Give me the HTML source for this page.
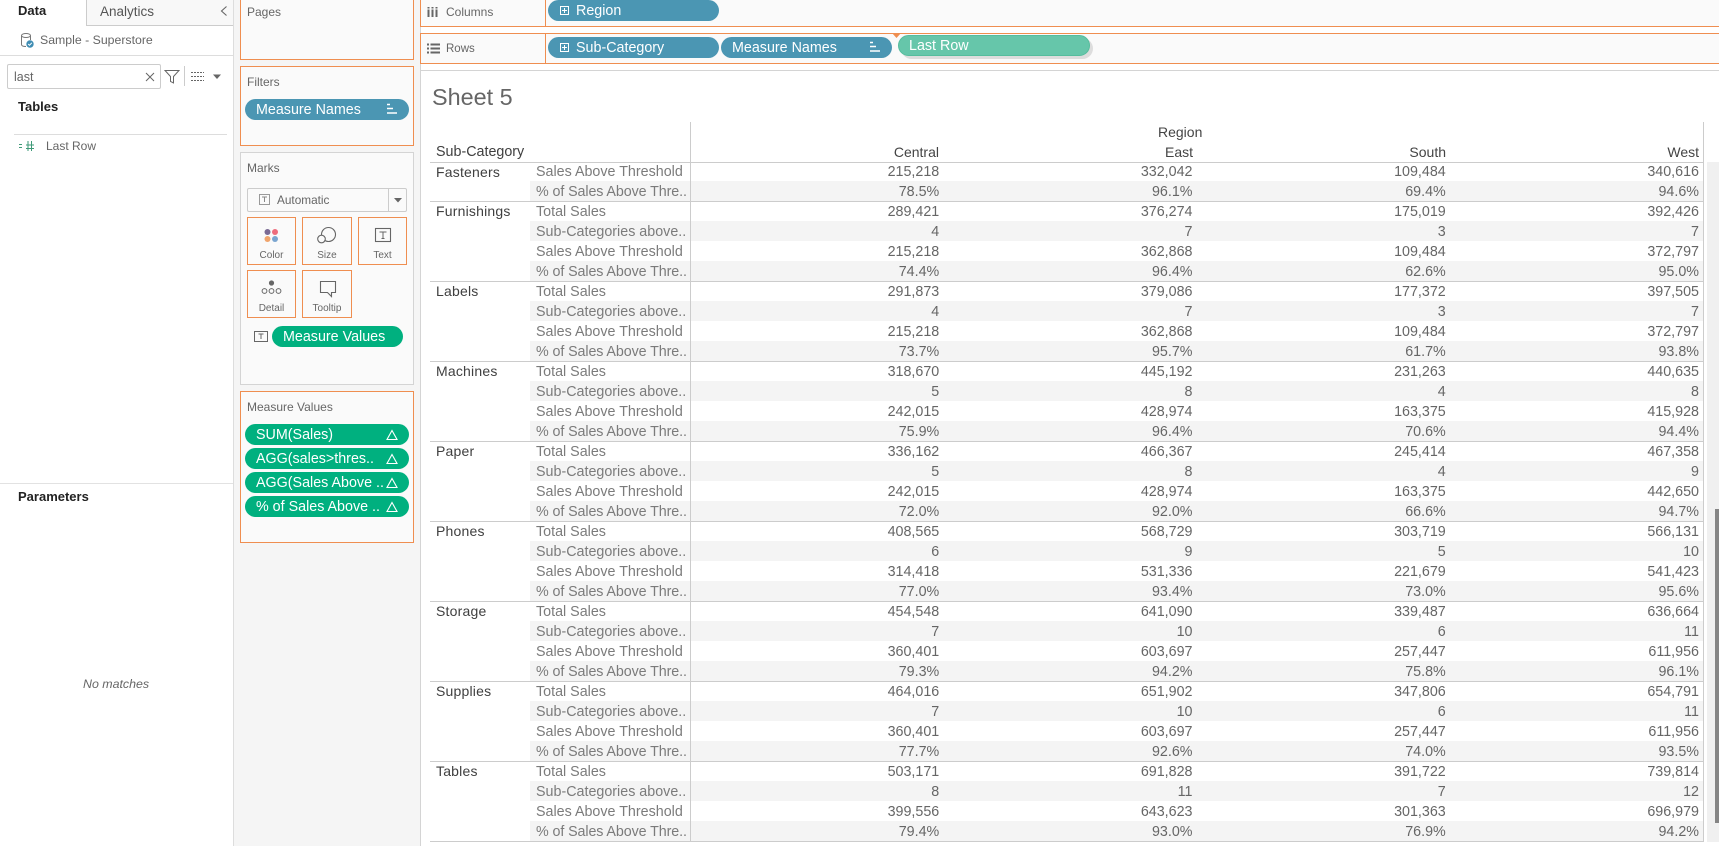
<!DOCTYPE html>
<html><head><meta charset="utf-8"><title>Sheet 5</title>
<style>
*{box-sizing:border-box}
html,body{margin:0;padding:0}
body{width:1719px;height:846px;overflow:hidden;background:#fff;font-family:"Liberation Sans",sans-serif;position:relative;color:#666}
.x{position:absolute}
.t{position:absolute;white-space:nowrap;line-height:16px}
.box{position:absolute;background:#fafafa;border:1px solid #ef8e50}
.pill{position:absolute;height:21px;border-radius:11px;color:#fff;font-size:14.3px;line-height:23px;white-space:nowrap;padding-left:11px}
.bl{background:#4b96b3}.gr{background:#00b07f}
.pill .d{position:absolute;right:11px;top:4px}
.btn{position:absolute;width:49px;height:48px;border:1px solid #ef8e50;background:#fafafa;font-size:10px;line-height:14px;text-align:center;color:#666}
.btn span{position:absolute;left:0;right:0;top:31px}
.btn svg{position:absolute;left:12px;top:6px}
#tb{position:absolute;left:430px;top:161px;width:1273px;font-size:14.3px;color:#666}
.g{position:relative}
.g::before{content:"";position:absolute;left:0;right:0;top:0;height:1px;background:#ccc;z-index:2}
.g.f::before{top:1px}
.r{display:flex;height:20px;line-height:20px;white-space:nowrap}
.r b{display:block;font-weight:400;width:100px;padding-left:6px;color:#3f3f3f;font-size:14px;letter-spacing:.2px}
.r i{display:block;font-style:normal;width:160px;padding:1px 0 0 6px;color:#7b7b7b}
.r:last-child i{letter-spacing:-.1px}
.r u{display:block;text-decoration:none;width:253.25px;text-align:right;padding:1px 4px 0 0}
.r:nth-child(even) i,.r:nth-child(even) u{background:#f4f4f4}
</style></head><body>

<!-- Left data pane -->
<div class="x" style="left:233px;top:0;width:187px;height:846px;background:#f5f5f5"></div>
<div class="x" style="left:233px;top:0;width:1px;height:846px;background:#ddd"></div>
<div class="x" style="left:86px;top:0;width:147px;height:26px;background:#f8f8f8;border-left:1px solid #ccc;border-bottom:1px solid #ccc"></div>
<div class="t" style="left:18px;top:3px;font-size:13px;font-weight:700;color:#222">Data</div>
<div class="t" style="left:100px;top:4px;font-size:13.5px;color:#555">Analytics</div>
<svg class="x" style="left:219px;top:5px" width="10" height="12"><path d="M7.5 1.5 L2.5 6 L7.5 10.5" fill="none" stroke="#666" stroke-width="1.1"/></svg>
<svg class="x" style="left:19px;top:32px" width="17" height="17"><ellipse cx="7" cy="3.5" rx="4.5" stroke="#777" fill="none" ry="2"/><path d="M2.5 3.5V12.5Q2.5 14.5 7 14.5M11.500 3.500V8" fill="none" stroke="#777"/><circle cx="11" cy="12" r="3.700" fill="#3f8db3"/><path d="M9.200 12l1.300 1.300 2.300-2.500" stroke="#fff" fill="none"/></svg>
<div class="t" style="left:40px;top:32px;font-size:12.3px;color:#666">Sample - Superstore</div>
<div class="x" style="left:0;top:55px;width:233px;height:1px;background:#ddd"></div>
<div class="x" style="left:7px;top:64px;width:154px;height:25px;border:1px solid #ccc;border-radius:2px;background:#fff"></div>
<div class="t" style="left:14px;top:69px;font-size:12.5px;color:#666">last</div>
<svg class="x" style="left:145px;top:72px" width="10" height="10"><path d="M1 1L9 9M9 1L1 9" stroke="#666" stroke-width="1"/></svg>
<svg class="x" style="left:164px;top:69px" width="16" height="15"><path d="M1 1.500H15L9.500 7.500V14L6.500 12.500V7.500Z" fill="none" stroke="#666"/></svg>
<div class="x" style="left:184px;top:66px;width:1px;height:20px;background:#ccc"></div>
<svg class="x" style="left:191px;top:72px" width="13" height="9"><path d="M0 .5H13M0 4.500H13M0 8.500H13" stroke="#666" stroke-dasharray="2 1"/></svg>
<svg class="x" style="left:213px;top:74px" width="8" height="6"><path d="M0 .5H8L4 5Z" fill="#666"/></svg>
<div class="t" style="left:18px;top:99px;font-size:13px;font-weight:700;color:#222">Tables</div>
<div class="x" style="left:14px;top:134px;width:213px;height:1px;background:#ddd"></div>
<svg class="x" style="left:18px;top:140px" width="17" height="12"><path d="M1 4.500H4M1 7.500H4M8 5H16M8 8.500H16M10 1V11M13.500 1V11" stroke="#3f9a78" fill="none"/></svg>
<div class="t" style="left:46px;top:138px;font-size:12px;color:#666">Last Row</div>
<div class="x" style="left:0;top:483px;width:233px;height:1px;background:#e2e2e2"></div>
<div class="t" style="left:18px;top:489px;font-size:13px;font-weight:700;color:#222">Parameters</div>
<div class="t" style="left:83px;top:676px;font-size:12.4px;font-style:italic;color:#666">No matches</div>

<!-- Cards pane -->
<div class="box" style="left:240px;top:-2px;width:174px;height:62px"></div>
<div class="t" style="left:247px;top:4px;font-size:12px">Pages</div>
<div class="box" style="left:240px;top:66px;width:174px;height:80px"></div>
<div class="t" style="left:247px;top:74px;font-size:12px">Filters</div>
<div class="pill bl" style="left:245px;top:99px;width:164px">Measure Names<svg class="d" width="12" height="12"><path d="M1 1.500H4M1 5.500H7M1 10H11" stroke="#fff" stroke-width="1.500"/></svg></div>
<div class="x" style="left:240px;top:152px;width:174px;height:233px;background:#fafafa;border:1px solid #d4d4d4"></div>
<div class="t" style="left:247px;top:160px;font-size:12px">Marks</div>
<div class="x" style="left:247px;top:188px;width:160px;height:24px;background:#fafafa;border:1px solid #ccc;border-radius:2px"></div>
<div class="x" style="left:388px;top:189px;width:1px;height:22px;background:#ccc"></div>
<svg class="x" style="left:259px;top:194px" width="12" height="12"><rect x=".5" y=".5" width="10" height="10" fill="none" stroke="#999"/><path d="M3 3H8M5.500 3V8" stroke="#888"/></svg>
<div class="t" style="left:277px;top:192px;font-size:11.8px">Automatic</div>
<svg class="x" style="left:394px;top:198px" width="8" height="5"><path d="M0 0H8L4 4.500Z" fill="#666"/></svg>

<div class="btn" style="left:247px;top:217px"><svg width="25" height="22"><circle cx="11" cy="5" r="3" fill="#7a6a94" transform="translate(-3.500 3)"/><circle cx="15" cy="8" r="3" fill="#ee6c7c"/><circle cx="7.500" cy="15" r="3" fill="#f0a46c"/><circle cx="15" cy="15" r="3" fill="#7aa5d0"/></svg><span>Color</span></div>
<div class="btn" style="left:302px;top:217px;width:50px"><svg width="25" height="24"><circle cx="13.500" cy="10.500" r="7" fill="none" stroke="#666" stroke-width="1.100"/><circle cx="6.500" cy="15" r="3.800" fill="#fafafa" stroke="#666" stroke-width="1.100"/></svg><span>Size</span></div>
<div class="btn" style="left:358px;top:217px"><svg width="25" height="24"><rect x="4.500" y="4.500" width="15" height="13" fill="none" stroke="#666" stroke-width="1.100"/><path d="M8.500 8H15.500M12 8V14.500M10.500 14.500H13.500" stroke="#666"/></svg><span>Text</span></div>
<div class="btn" style="left:247px;top:270px"><svg width="25" height="22"><circle cx="11.500" cy="6" r="2.600" fill="#666"/><circle cx="4.500" cy="14" r="2.400" fill="none" stroke="#666"/><circle cx="11.500" cy="14" r="2.400" fill="none" stroke="#666"/><circle cx="18.500" cy="14" r="2.400" fill="none" stroke="#666"/></svg><span>Detail</span></div>
<div class="btn" style="left:302px;top:270px;width:50px"><svg width="25" height="24"><path d="M5.500 4.500H20.500V15.500H16.500V19.500L12.500 15.500H5.500Z" fill="none" stroke="#666" stroke-width="1.100"/></svg><span>Tooltip</span></div>

<svg class="x" style="left:254px;top:331px" width="15" height="12"><rect x=".5" y=".5" width="13" height="10" fill="none" stroke="#666"/><path d="M4.500 3H9.500M7 3V8" stroke="#666"/></svg>
<div class="pill gr" style="left:272px;top:326px;width:131px">Measure Values</div>

<div class="box" style="left:240px;top:391px;width:174px;height:152px"></div>
<div class="t" style="left:247px;top:399px;font-size:12px">Measure Values</div>
<div class="pill gr" style="left:245px;top:424px;width:164px">SUM(Sales)<svg class="d" width="12" height="12" style="top:5px"><path d="M6 1.500L11 10.500H1Z" fill="none" stroke="#fff" stroke-width="1.100"/></svg></div>
<div class="pill gr" style="left:245px;top:448px;width:164px">AGG(sales&gt;thres..<svg class="d" width="12" height="12" style="top:5px"><path d="M6 1.500L11 10.500H1Z" fill="none" stroke="#fff" stroke-width="1.100"/></svg></div>
<div class="pill gr" style="left:245px;top:472px;width:164px">AGG(Sales Above ..<svg class="d" width="12" height="12" style="top:5px"><path d="M6 1.500L11 10.500H1Z" fill="none" stroke="#fff" stroke-width="1.100"/></svg></div>
<div class="pill gr" style="left:245px;top:496px;width:164px">% of Sales Above ..<svg class="d" width="12" height="12" style="top:5px"><path d="M6 1.500L11 10.500H1Z" fill="none" stroke="#fff" stroke-width="1.100"/></svg></div>

<div class="x" style="left:420px;top:0;width:1px;height:846px;background:#d4d4d4"></div>

<!-- Shelves -->
<div class="box" style="left:420px;top:-2px;width:1302px;height:29px"></div>
<div class="x" style="left:545px;top:0;width:1px;height:26px;background:#ef8e50"></div>
<svg class="x" style="left:427px;top:6px" width="12" height="11"><path d="M1.500 3.500V11M5.500 3.500V11M9.500 3.500V11M1.500 1V2.500M5.500 1V2.500M9.500 1V2.500" stroke="#666" stroke-width="2"/></svg>
<div class="t" style="left:446px;top:4px;font-size:12px">Columns</div>
<div class="box" style="left:420px;top:33px;width:1302px;height:31px"></div>
<div class="x" style="left:545px;top:34px;width:1px;height:29px;background:#ef8e50"></div>
<svg class="x" style="left:427px;top:43px" width="13" height="11"><path d="M0 1.500H2M3.500 1.500H13M0 5.500H2M3.500 5.500H13M0 9.500H2M3.500 9.500H13" stroke="#666" stroke-width="2"/></svg>
<div class="t" style="left:446px;top:41px;font-size:11.5px">Rows</div>

<div class="pill bl" style="left:548px;top:0;width:171px;padding-left:28px">Region<svg class="x" style="left:12px;top:6px" width="9" height="9"><rect x=".5" y=".5" width="8" height="8" fill="none" stroke="#fff"/><path d="M2 4.500H7M4.500 2V7" stroke="#fff"/></svg></div>
<div class="pill bl" style="left:548px;top:37px;width:171px;padding-left:28px">Sub-Category<svg class="x" style="left:12px;top:6px" width="9" height="9"><rect x=".5" y=".5" width="8" height="8" fill="none" stroke="#fff"/><path d="M2 4.500H7M4.500 2V7" stroke="#fff"/></svg></div>
<div class="pill bl" style="left:721px;top:37px;width:171px">Measure Names<svg class="d" width="12" height="12"><path d="M1 1.500H4M1 5.500H7M1 10H11" stroke="#fff" stroke-width="1.500"/></svg></div>
<svg class="x" style="left:892px;top:33px" width="9" height="6"><path d="M0 0H9L4.500 5Z" fill="#ef8e50"/></svg>
<div class="pill" style="left:898px;top:35px;width:192px;background:#66c6aa;border:1px solid #55bd9d;box-shadow:3px 3px 0 #ddd;line-height:21px;padding-left:10px">Last Row</div>

<!-- View -->
<div class="x" style="left:421px;top:70px;width:1298px;height:1px;background:#d4d4d4"></div>
<div class="t" style="left:432px;top:83px;font-size:23.4px;line-height:28px;color:#666">Sheet 5</div>
<div class="t" style="left:1158px;top:124px;font-size:14px;color:#444">Region</div>
<div class="t" style="left:436px;top:144px;font-size:14.3px;color:#3f3f3f">Sub-Category</div>
<div class="t" style="right:780px;top:144px;font-size:14px;color:#444">Central</div>
<div class="t" style="right:526px;top:144px;font-size:14px;color:#444">East</div>
<div class="t" style="right:273px;top:144px;font-size:14px;color:#444">South</div>
<div class="t" style="right:20px;top:144px;font-size:14px;color:#444">West</div>

<div class="x" style="left:1707px;top:162px;width:12px;height:680px;background:#f0f0f0"></div>
<div class="x" style="left:1715px;top:509px;width:4px;height:314px;background:#858585"></div>

<div id="tb">
<div class="g f">
<div class="r"><b style="padding-top:1px">Fasteners</b><i>Sales Above Threshold</i><u>215,218</u><u>332,042</u><u>109,484</u><u>340,616</u></div>
<div class="r"><b></b><i>% of Sales Above Thre..</i><u>78.5%</u><u>96.1%</u><u>69.4%</u><u>94.6%</u></div>
</div>
<div class="g">
<div class="r"><b>Furnishings</b><i>Total Sales</i><u>289,421</u><u>376,274</u><u>175,019</u><u>392,426</u></div>
<div class="r"><b></b><i>Sub-Categories above..</i><u>4</u><u>7</u><u>3</u><u>7</u></div>
<div class="r"><b></b><i>Sales Above Threshold</i><u>215,218</u><u>362,868</u><u>109,484</u><u>372,797</u></div>
<div class="r"><b></b><i>% of Sales Above Thre..</i><u>74.4%</u><u>96.4%</u><u>62.6%</u><u>95.0%</u></div>
</div>
<div class="g">
<div class="r"><b>Labels</b><i>Total Sales</i><u>291,873</u><u>379,086</u><u>177,372</u><u>397,505</u></div>
<div class="r"><b></b><i>Sub-Categories above..</i><u>4</u><u>7</u><u>3</u><u>7</u></div>
<div class="r"><b></b><i>Sales Above Threshold</i><u>215,218</u><u>362,868</u><u>109,484</u><u>372,797</u></div>
<div class="r"><b></b><i>% of Sales Above Thre..</i><u>73.7%</u><u>95.7%</u><u>61.7%</u><u>93.8%</u></div>
</div>
<div class="g">
<div class="r"><b>Machines</b><i>Total Sales</i><u>318,670</u><u>445,192</u><u>231,263</u><u>440,635</u></div>
<div class="r"><b></b><i>Sub-Categories above..</i><u>5</u><u>8</u><u>4</u><u>8</u></div>
<div class="r"><b></b><i>Sales Above Threshold</i><u>242,015</u><u>428,974</u><u>163,375</u><u>415,928</u></div>
<div class="r"><b></b><i>% of Sales Above Thre..</i><u>75.9%</u><u>96.4%</u><u>70.6%</u><u>94.4%</u></div>
</div>
<div class="g">
<div class="r"><b>Paper</b><i>Total Sales</i><u>336,162</u><u>466,367</u><u>245,414</u><u>467,358</u></div>
<div class="r"><b></b><i>Sub-Categories above..</i><u>5</u><u>8</u><u>4</u><u>9</u></div>
<div class="r"><b></b><i>Sales Above Threshold</i><u>242,015</u><u>428,974</u><u>163,375</u><u>442,650</u></div>
<div class="r"><b></b><i>% of Sales Above Thre..</i><u>72.0%</u><u>92.0%</u><u>66.6%</u><u>94.7%</u></div>
</div>
<div class="g">
<div class="r"><b>Phones</b><i>Total Sales</i><u>408,565</u><u>568,729</u><u>303,719</u><u>566,131</u></div>
<div class="r"><b></b><i>Sub-Categories above..</i><u>6</u><u>9</u><u>5</u><u>10</u></div>
<div class="r"><b></b><i>Sales Above Threshold</i><u>314,418</u><u>531,336</u><u>221,679</u><u>541,423</u></div>
<div class="r"><b></b><i>% of Sales Above Thre..</i><u>77.0%</u><u>93.4%</u><u>73.0%</u><u>95.6%</u></div>
</div>
<div class="g">
<div class="r"><b>Storage</b><i>Total Sales</i><u>454,548</u><u>641,090</u><u>339,487</u><u>636,664</u></div>
<div class="r"><b></b><i>Sub-Categories above..</i><u>7</u><u>10</u><u>6</u><u>11</u></div>
<div class="r"><b></b><i>Sales Above Threshold</i><u>360,401</u><u>603,697</u><u>257,447</u><u>611,956</u></div>
<div class="r"><b></b><i>% of Sales Above Thre..</i><u>79.3%</u><u>94.2%</u><u>75.8%</u><u>96.1%</u></div>
</div>
<div class="g">
<div class="r"><b>Supplies</b><i>Total Sales</i><u>464,016</u><u>651,902</u><u>347,806</u><u>654,791</u></div>
<div class="r"><b></b><i>Sub-Categories above..</i><u>7</u><u>10</u><u>6</u><u>11</u></div>
<div class="r"><b></b><i>Sales Above Threshold</i><u>360,401</u><u>603,697</u><u>257,447</u><u>611,956</u></div>
<div class="r"><b></b><i>% of Sales Above Thre..</i><u>77.7%</u><u>92.6%</u><u>74.0%</u><u>93.5%</u></div>
</div>
<div class="g">
<div class="r"><b>Tables</b><i>Total Sales</i><u>503,171</u><u>691,828</u><u>391,722</u><u>739,814</u></div>
<div class="r"><b></b><i>Sub-Categories above..</i><u>8</u><u>11</u><u>7</u><u>12</u></div>
<div class="r"><b></b><i>Sales Above Threshold</i><u>399,556</u><u>643,623</u><u>301,363</u><u>696,979</u></div>
<div class="r"><b></b><i>% of Sales Above Thre..</i><u>79.4%</u><u>93.0%</u><u>76.9%</u><u>94.2%</u></div>
</div>
</div>
<div class="x" style="left:430px;top:841px;width:1273px;height:1px;background:#ccc"></div>
<div class="x" style="left:690px;top:122px;width:1px;height:720px;background:#ccc;z-index:3"></div>
<div class="x" style="left:1703px;top:122px;width:1px;height:720px;background:#ccc;z-index:3"></div>
</body></html>
